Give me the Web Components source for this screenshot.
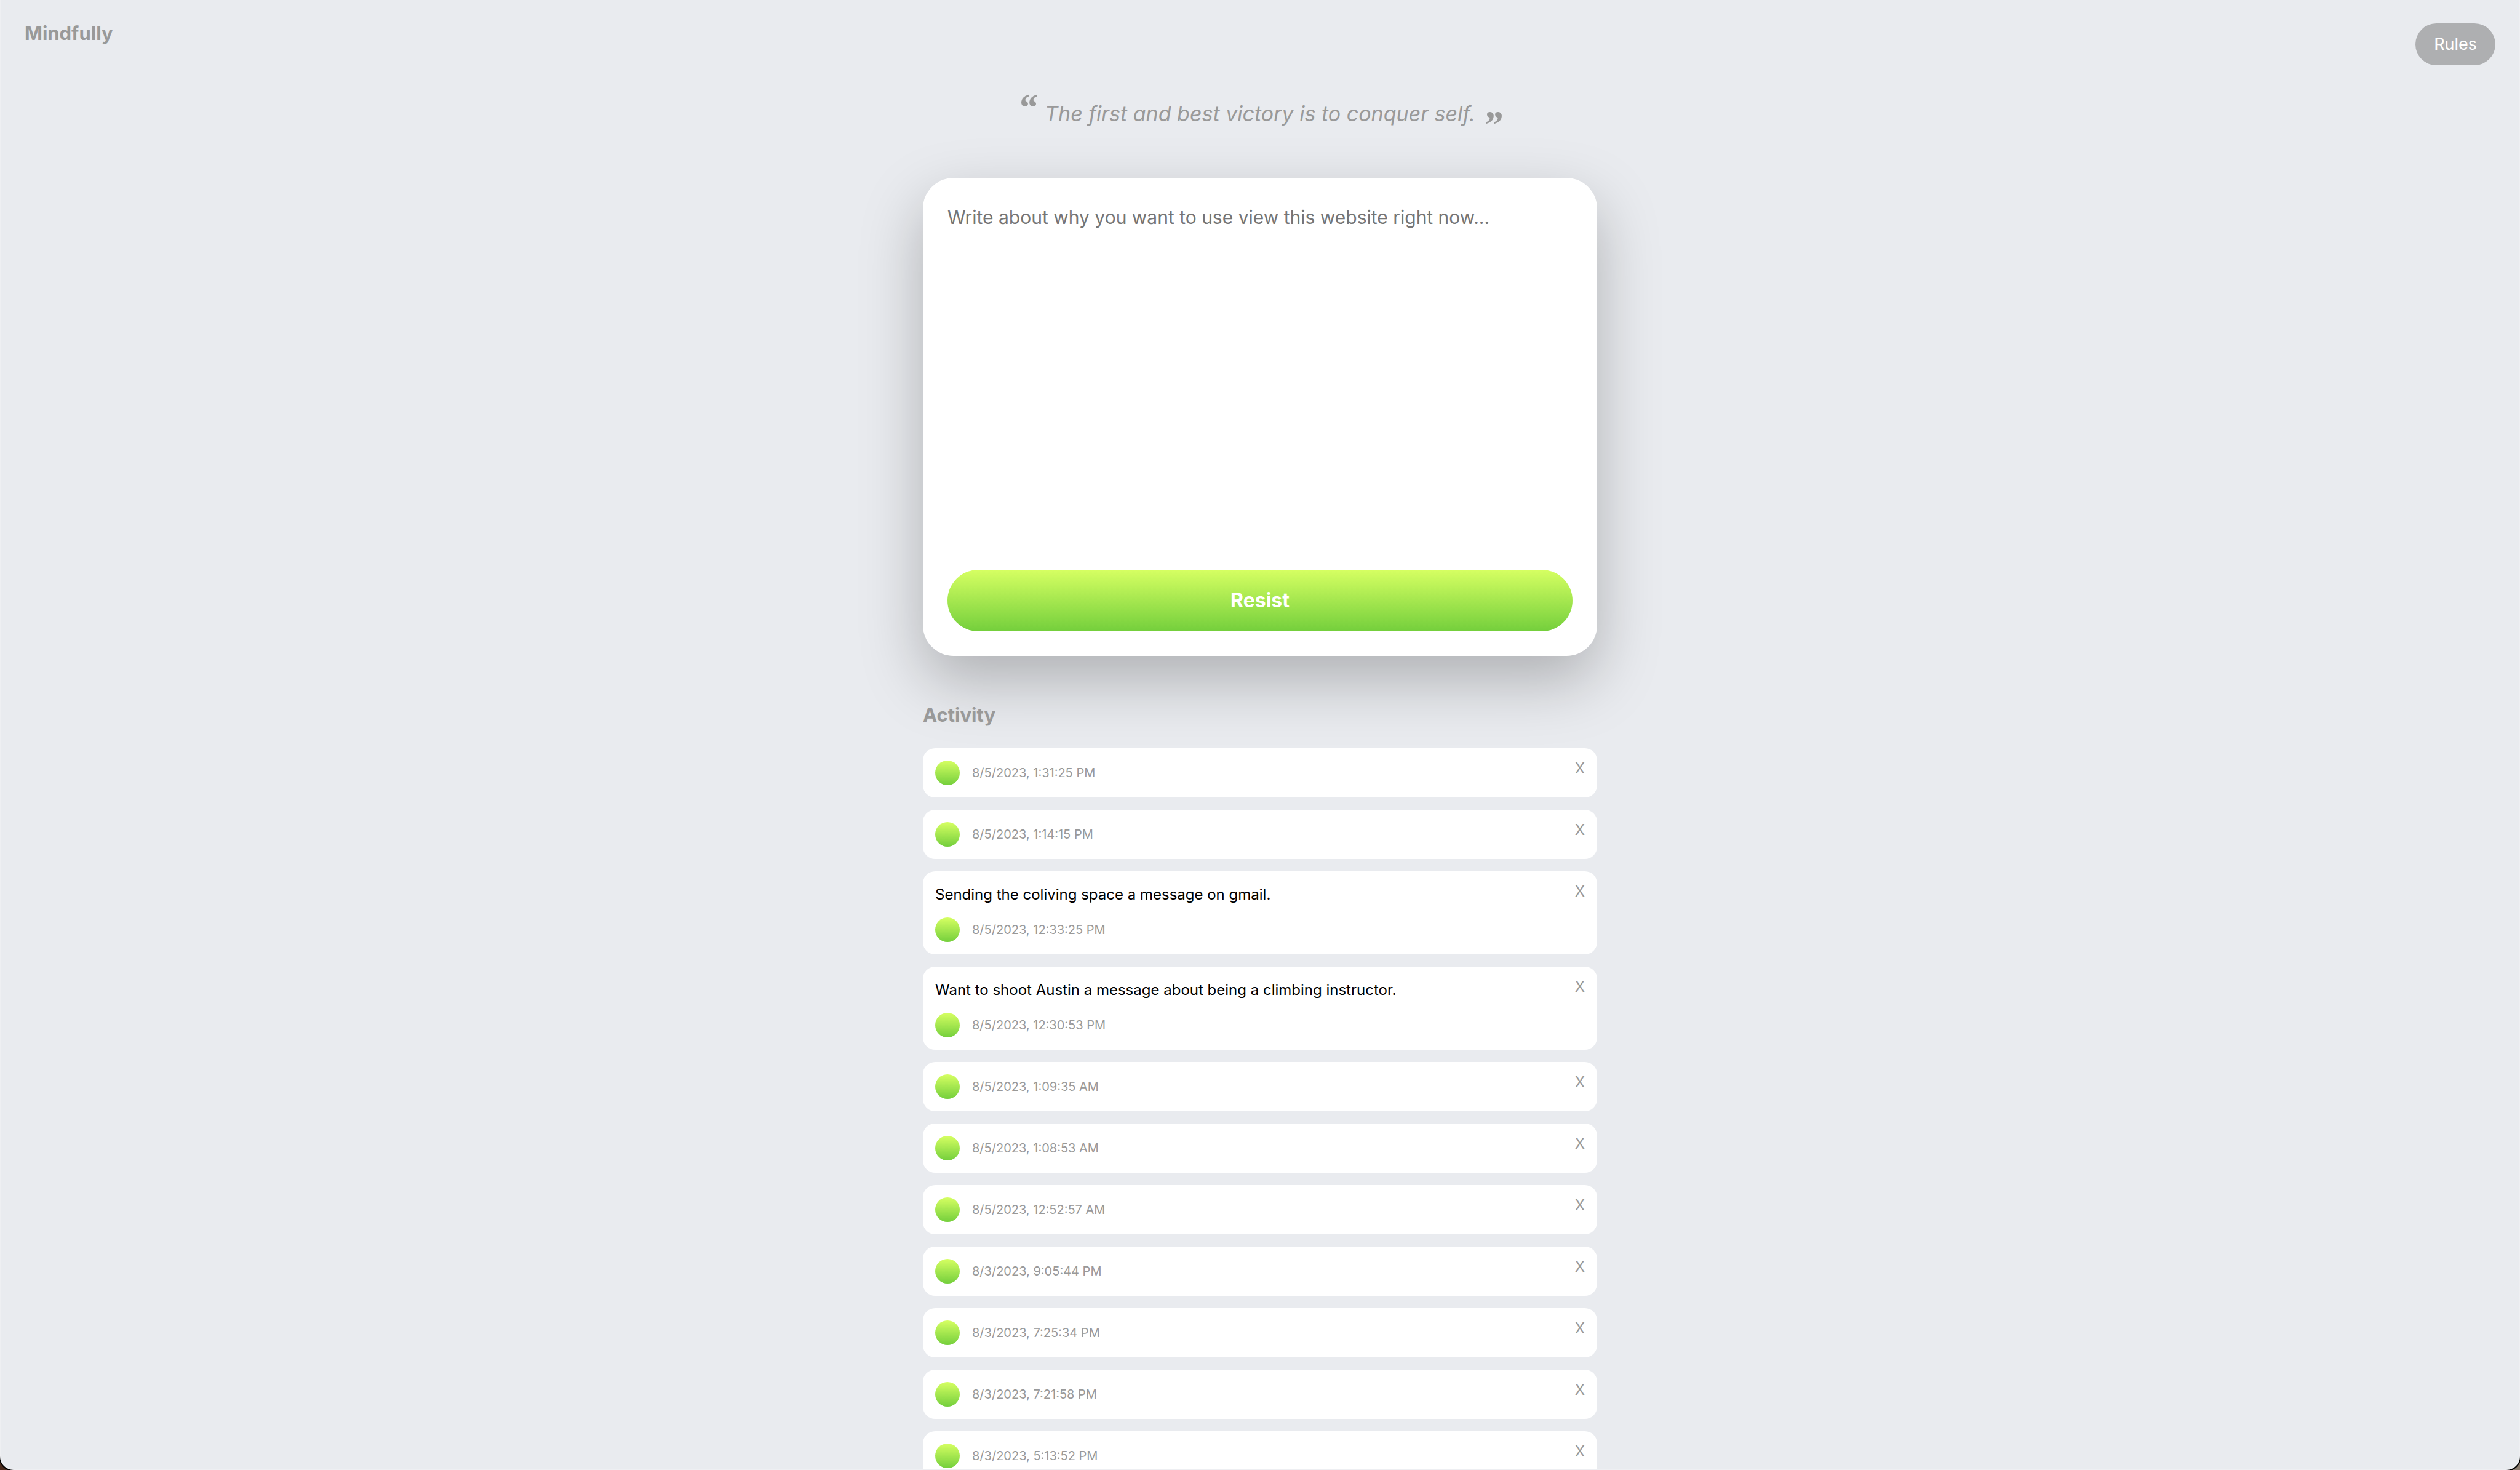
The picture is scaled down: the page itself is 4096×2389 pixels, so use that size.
<!DOCTYPE html>
<html lang="en">
<head>
<meta charset="utf-8">
<title>Mindfully</title>
<style>
  html { background: linear-gradient(90deg, #4a2a1c 50%, #8a7b6d 50%); }
  body { margin: 0; font-family: Inter, "Liberation Sans", sans-serif; color: #000; }
</style>
</head>
<body>
<mind-app></mind-app>

<template id="app">
  <style>
    :host {
      --muted: #999;
      --accent: linear-gradient(180deg, #d6ff62, #74cf3c);
      display: block; box-sizing: border-box; height: 100vh; overflow: hidden;
      background: #e9ebef; border: 2px solid #eeeff2; border-top: 0;
      border-radius: 0 0 22px 22px; box-shadow: 0 0 0 2px #000;
    }
    main { display: flex; flex-direction: column; width: 1096px; max-width: 100%; margin: 0 auto; }
  </style>
  <mind-header>Mindfully</mind-header>
  <main>
    <mind-quote>The first and best victory is to conquer self.</mind-quote>
    <mind-journal placeholder="Write about why you want to use view this website right now...">Resist</mind-journal>
    <mind-activity>Activity</mind-activity>
  </main>
</template>

<template id="header">
  <style>
    :host { display: block; }
    header { display: flex; justify-content: space-between; align-items: flex-start; padding: 38px 38px 0; }
    h1 { margin: 0; font-size: 31px; line-height: 32px; font-weight: 700; color: var(--muted); }
    button {
      border: 0; height: 68px; padding: 0 30px; border-radius: 34px; background: #aeafb1;
      color: #fff; font: 400 27px/32px Inter, sans-serif;
    }
  </style>
  <header><h1><slot></slot></h1><button type="button">Rules</button></header>
</template>

<template id="quote">
  <style>
    :host { display: block; padding: 59px 0 84px; }
    blockquote {
      display: flex; justify-content: center; align-items: flex-start; gap: 12px; height: 40px; margin: 0;
      font-size: 34px; line-height: 40px; font-style: italic; color: var(--muted);
    }
    .mark { font: italic 700 64px/20px "Liberation Serif", serif; }
    .close { padding-top: 28px; }
  </style>
  <blockquote><span class="mark">“</span><span><slot></slot></span><span class="mark close">”</span></blockquote>
</template>

<template id="journal">
  <style>
    :host { display: block; }
    form {
      display: flex; flex-direction: column; box-sizing: border-box; height: 777px; padding: 40px;
      border-radius: 50px; background: #fff; box-shadow: 0 40px 100px rgba(0, 0, 0, .25);
    }
    textarea {
      flex: 1; border: 0; outline: 0; padding: 0; resize: none; background: none;
      font: 400 30px/48px Inter, sans-serif; color: #000;
    }
    textarea::placeholder { color: #757575; opacity: 1; }
    button {
      height: 100px; border: 0; border-radius: 50px; background: var(--accent);
      color: #fff; font: 700 32px/40px Inter, sans-serif;
    }
  </style>
  <form>
    <textarea aria-label="Journal entry"></textarea>
    <button type="button"><slot></slot></button>
  </form>
</template>

<template id="activity">
  <style>
    :host { display: block; position: relative; padding-top: 76px; }
    h2 { margin: 0 0 34px; font-size: 31px; line-height: 40px; font-weight: 700; color: var(--muted); }
    section { display: flex; flex-direction: column; gap: 20px; }
  </style>
  <h2><slot></slot></h2>
  <section></section>
</template>

<template id="entry">
  <style>
    :host { display: flex; align-items: flex-start; gap: 20px; padding: 20px; border-radius: 20px; background: #fff; }
    article { flex: 1; display: flex; flex-direction: column; gap: 20px; }
    p { margin: 0; font-size: 24px; line-height: 35px; font-weight: 400; }
    p[hidden] { display: none; }
    div { display: flex; align-items: center; gap: 20px; color: var(--muted); font-size: 20px; line-height: 24px; }
    i { width: 40px; height: 40px; border-radius: 50%; background: var(--accent); }
    button { border: 0; padding: 0; background: none; color: var(--muted); font: 400 24px/26px Inter, sans-serif; }
  </style>
  <article>
    <p><slot></slot></p>
    <div><i></i><time></time></div>
  </article>
  <button type="button" aria-label="Delete entry">X</button>
</template>

<script>
  class Base extends HTMLElement {
    render(id) {
      const root = this.attachShadow({ mode: 'open' });
      root.append(document.getElementById(id).content.cloneNode(true));
      return root;
    }
  }

  customElements.define('mind-header', class extends Base {
    connectedCallback() { this.render('header'); }
  });

  customElements.define('mind-quote', class extends Base {
    connectedCallback() { this.render('quote'); }
  });

  customElements.define('mind-journal', class extends Base {
    connectedCallback() {
      this.render('journal').querySelector('textarea').placeholder = this.getAttribute('placeholder');
    }
  });

  customElements.define('mind-entry', class extends Base {
    connectedCallback() {
      const root = this.render('entry');
      root.querySelector('time').textContent = this.getAttribute('when');
      root.querySelector('p').hidden = !this.textContent;
      root.querySelector('button').addEventListener('click', () => this.remove());
    }
  });

  const entries = [
    ['8/5/2023, 1:31:25 PM'],
    ['8/5/2023, 1:14:15 PM'],
    ['8/5/2023, 12:33:25 PM', 'Sending the coliving space a message on gmail.'],
    ['8/5/2023, 12:30:53 PM', 'Want to shoot Austin a message about being a climbing instructor.'],
    ['8/5/2023, 1:09:35 AM'],
    ['8/5/2023, 1:08:53 AM'],
    ['8/5/2023, 12:52:57 AM'],
    ['8/3/2023, 9:05:44 PM'],
    ['8/3/2023, 7:25:34 PM'],
    ['8/3/2023, 7:21:58 PM'],
    ['8/3/2023, 5:13:52 PM'],
  ];

  customElements.define('mind-activity', class extends Base {
    connectedCallback() {
      const list = this.render('activity').querySelector('section');
      for (const [when, note = ''] of entries) {
        const entry = document.createElement('mind-entry');
        entry.setAttribute('when', when);
        entry.textContent = note;
        list.append(entry);
      }
    }
  });

  customElements.define('mind-app', class extends Base {
    connectedCallback() { this.render('app'); }
  });
</script>
</body>
</html>
